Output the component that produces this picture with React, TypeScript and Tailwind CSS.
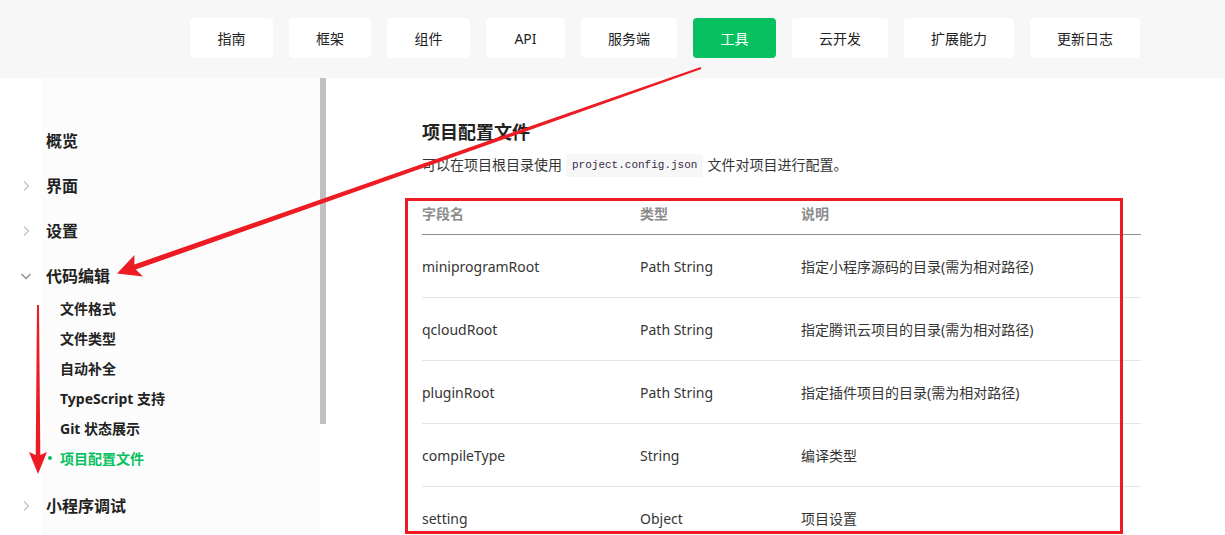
import React from 'react';

const navItems = [
  { label: '指南', w: 'w-[83px]' },
  { label: '框架', w: 'w-[82px]' },
  { label: '组件', w: 'w-[83px]' },
  { label: 'API', w: 'w-[79px]' },
  { label: '服务端', w: 'w-[96px]' },
  { label: '工具', w: 'w-[83px]' },
  { label: '云开发', w: 'w-[96px]' },
  { label: '扩展能力', w: 'w-[110px]' },
  { label: '更新日志', w: 'w-[110px]' },
];

const subItems = ['文件格式', '文件类型', '自动补全', 'TypeScript 支持', 'Git 状态展示', '项目配置文件'];

const rows = [
  { name: 'miniprogramRoot', type: 'Path String', desc: '指定小程序源码的目录(需为相对路径)' },
  { name: 'qcloudRoot', type: 'Path String', desc: '指定腾讯云项目的目录(需为相对路径)' },
  { name: 'pluginRoot', type: 'Path String', desc: '指定插件项目的目录(需为相对路径)' },
  { name: 'compileType', type: 'String', desc: '编译类型' },
  { name: 'setting', type: 'Object', desc: '项目设置' },
];

function ChevronRight() {
  return (
    <svg width="8" height="12" viewBox="0 0 8 12" fill="none" stroke="#c4c4c4" strokeWidth="1.3">
      <path d="M2 1.5l4.5 4.5L2 10.5" />
    </svg>
  );
}

function ChevronDown() {
  return (
    <svg width="12" height="8" viewBox="0 0 12 8" fill="none" stroke="#8a8a8a" strokeWidth="1.3">
      <path d="M1.5 2l4.5 4.5L10.5 2" />
    </svg>
  );
}

function TopItem({ label, icon }: { label: string; icon?: 'right' | 'down' }) {
  return (
    <div className="flex items-center h-[45px]">
      <div className={icon === 'down' ? 'w-[46px] flex pl-[20px]' : 'w-[46px] flex pl-[22px]'}>
        {icon === 'right' && <ChevronRight />}
        {icon === 'down' && <ChevronDown />}
      </div>
      <span className="text-[16px] font-semibold text-[#222]">{label}</span>
    </div>
  );
}

export default function App() {
  return (
    <div className="relative w-[1225px] h-[535px] overflow-hidden bg-white font-['Noto_Sans','Noto_Sans_CJK_SC',sans-serif]">
      {/* Top nav */}
      <div className="h-[78px] bg-[#f7f7f7] pt-[18px]">
        <div className="flex gap-4 ml-[190px]">
          {navItems.map((item) => (
            <div
              key={item.label}
              className={
                item.label === '工具'
                  ? `${item.w} h-[40px] rounded-[4px] bg-[#07c160] text-white text-[14px] flex items-center justify-center`
                  : `${item.w} h-[40px] rounded-[4px] bg-white text-[#222] text-[14px] flex items-center justify-center`
              }
            >
              {item.label}
            </div>
          ))}
        </div>
      </div>

      <div className="flex h-[457px]">
        {/* Sidebar */}
        <div className="w-[320px] bg-[linear-gradient(to_right,#ffffff_42px,#fcfcfc_42px)] pt-[40px]">
          <TopItem label="概览" />
          <TopItem label="界面" icon="right" />
          <TopItem label="设置" icon="right" />
          <TopItem label="代码编辑" icon="down" />
          <div className="-mt-[5px]">
            {subItems.map((s) => {
              const active = s === '项目配置文件';
              return (
                <div key={s} className="relative h-[30px] flex items-center pl-[60px]">
                  {active && <span className="absolute left-[48px] w-[4px] h-[4px] rounded-full bg-[#07c160]" />}
                  <span className={active ? 'text-[14px] font-bold text-[#07c160]' : 'text-[14px] font-bold text-[#222]'}>
                    {s}
                  </span>
                </div>
              );
            })}
          </div>
          <div className="mt-[10px]">
            <TopItem label="小程序调试" icon="right" />
          </div>
        </div>

        {/* Scrollbar */}
        <div className="w-[6px]">
          <div className="h-[346px] bg-[#c1c1c1]" />
        </div>

        {/* Content */}
        <div className="flex-1 pl-[96px] pt-[41px]">
          <h1 className="text-[18px] leading-[26px] font-bold text-[#222]">项目配置文件</h1>
          <p className="mt-[8px] text-[14px] leading-[24px] text-[#353535] flex items-center">
            可以在项目根目录使用
            <code className="mx-[4px] px-[6px] h-[23px] flex items-center bg-[#f7f7f7] rounded-[3px] text-[11px] text-[#3a2a4a] font-['Liberation_Mono',monospace]">
              project.config.json
            </code>
            文件对项目进行配置。
          </p>

          <div className="mt-[15px] w-[719px]">
            <div className="grid grid-cols-[218px_161px_1fr] h-[43px] items-center border-b border-[#8c8c8c] text-[14px] font-semibold text-[#8c8c8c]">
              <span>字段名</span>
              <span>类型</span>
              <span>说明</span>
            </div>
            {rows.map((r) => (
              <div
                key={r.name}
                className="grid grid-cols-[218px_161px_1fr] h-[63px] items-center border-b border-[#e5e5e5] text-[14px] text-[#353535]"
              >
                <span>{r.name}</span>
                <span>{r.type}</span>
                <span>{r.desc}</span>
              </div>
            ))}
          </div>
        </div>
      </div>

      {/* Red annotations */}
      <svg className="absolute inset-0 pointer-events-none" width="1225" height="535" viewBox="0 0 1225 535">
        <rect x="406.5" y="199.5" width="715" height="333" fill="none" stroke="#ed1c24" strokeWidth="3" />
        <polygon
          fill="#ed1c24"
          points="701.4,69.1 135.7,269.6 143,276.5 117,273.5 134.5,255 134.3,264.4 700.6,66.9"
        />
        <polygon fill="#ed1c24" points="37,305 39,305 40.3,455 47,452 38,474 29,452 35.7,455" />
      </svg>
    </div>
  );
}
